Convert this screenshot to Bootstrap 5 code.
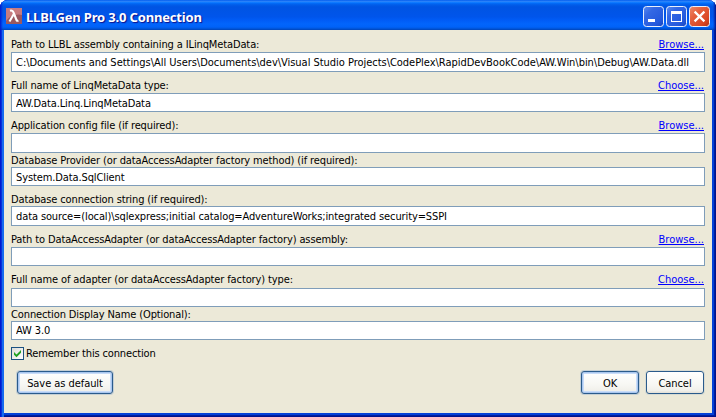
<!DOCTYPE html>
<html lang="en">
<head>
<meta charset="utf-8">
<title>LLBLGen Pro 3.0 Connection</title>
<link href="https://cdn.jsdelivr.net/npm/bootstrap@5.3.0/dist/css/bootstrap.min.css" rel="stylesheet">
<style>
body{background:#fff;font:11px/13px "DejaVu Sans Condensed","DejaVu Sans",sans-serif;color:#000;letter-spacing:-.12px;overflow:hidden}
.xp-window{width:716px;height:417px;padding:0 4px 4px;border-radius:8px 8px 0 0;background:#0831d9;
 box-shadow:inset 1px 0 #0019cf,inset 2px 0 #0831d9,inset 4px 0 #166aee,inset -1px -1px #00138c,inset -2px -2px #001ea0,inset -4px -4px #0441d8}
.xp-title{height:30px;margin:0 -4px;padding:2px 6px 0 6px;border-radius:8px 8px 0 0;
 background:linear-gradient(90deg,#0019cf 0,#0831d900 3px,#0831d900 calc(100% - 3px),#00138c 100%),linear-gradient(#0058ee 0,#2a83f8 4%,#2880fa 6%,#127dff 8%,#036ffc 10%,#0262ee 14%,#0057e5 20%,#0054e3 24%,#0055eb 56%,#005bf5 66%,#0265fc 80%,#0062f8 90%,#0056dc 95%,#0044b8 100%)}
.xp-caption{font:bold 13px/18px "Noto Sans",sans-serif;letter-spacing:-.17px;color:#fff;text-shadow:1px 1px 1px #0f1089;white-space:pre;padding-top:1px}
.client{height:383px;padding:0 7px;background:#ece9d8}
.field-label{height:21px;padding-bottom:1px}
.r22{height:22px}.r20{height:20px}.r14{height:14px;padding-bottom:0}
.field-label.r20{padding-bottom:0}
.field-label.up{padding-bottom:2px}
.field-label a{color:#00f;margin-right:1px;letter-spacing:0;text-decoration:underline;text-underline-offset:1px}
.field-label span{white-space:nowrap}
input.xp-input{height:19px;min-height:0;padding:1px 4px 0;border:1px solid #7f9db9;border-radius:0;background:#fff;color:#000;font:inherit;letter-spacing:-.11px}
input.h20{height:20px;padding:0 4px}
input.path-text{letter-spacing:-.032px}
input.low{padding:0 4px 1px}
.xp-check{width:13px;height:13px;border:1px solid #1c5180;background:linear-gradient(135deg,#dcdcd7,#fff)}
.check-row{height:13px;margin-top:7px;letter-spacing:-.15px}
.button-row{margin-top:11px;padding:0 1px 0 6px}
.xp-btn{height:23px;width:58px;padding:1px 0 0;border:1px solid #2a5b8c;border-radius:3px;background:linear-gradient(#fff,#f7f7f3 60%,#f1f0eb 88%,#e2dfd6);font:inherit;letter-spacing:-.06px;color:#000;box-shadow:0 0 0 1px #d8dbd3}
.xp-focus{box-shadow:0 0 0 1px #c5cfd4,inset 0 0 0 1px #a9c6ee,inset 0 0 0 2px #c8dcf8}
.xp-wide{width:96px}
</style>
<script src="https://cdn.jsdelivr.net/npm/bootstrap@5.3.0/dist/js/bootstrap.bundle.min.js"></script>
</head>
<body>
<div class="xp-window">
 <header class="xp-title d-flex align-items-center">
  <svg width="16" height="16" viewBox="0 0 16 16"><rect width="16" height="16" fill="#9b5960"/><path d="M0 0H16V7Q6 5 0 13Z" fill="#c77c80"/><path d="M4 2.7Q6.7 1.8 7.7 5L10.5 12Q11 13.2 12.4 12.5M7.8 6L3.5 13.5" fill="none" stroke="#fff" stroke-width="2.1"/></svg>
  <span class="xp-caption ms-1 me-auto">LLBLGen Pro 3.0 Connection</span>
  <svg width="67" height="21" viewBox="0 0 67 21">
   <defs>
    <linearGradient id="blue" x1="0" y1="0" x2="1" y2="1"><stop stop-color="#5b8bf0"/><stop offset=".3" stop-color="#3468e4"/><stop offset=".75" stop-color="#2459dd"/><stop offset="1" stop-color="#1744bd"/></linearGradient>
    <linearGradient id="red" x1="0" y1="0" x2="1" y2="1"><stop stop-color="#ee8a6c"/><stop offset=".35" stop-color="#e5603d"/><stop offset=".75" stop-color="#da4623"/><stop offset="1" stop-color="#b43010"/></linearGradient>
   </defs>
   <g stroke="#e8effc"><rect x=".5" y=".5" width="20" height="20" rx="3" fill="url(#blue)"/><rect x="23.5" y=".5" width="20" height="20" rx="3" fill="url(#blue)"/><rect x="46.5" y=".5" width="20" height="20" rx="3" fill="url(#red)"/></g>
   <path d="M5 13H12V16H5Z" fill="#fff"/>
   <path d="M28 5H39V16H28ZM29 8V15H38V8Z" fill="#fff" fill-rule="evenodd"/>
   <path d="M51.6 5.6L61.4 15.4M61.4 5.6L51.6 15.4" stroke="#fff" stroke-width="2.2"/>
  </svg>
 </header>
 <main class="client">
  <div class="field-label r22 d-flex justify-content-between align-items-end"><span>Path to LLBL assembly containing a ILinqMetaData:</span><a href="#">Browse...</a></div>
  <input class="form-control xp-input h20 path-text" value="C:\Documents and Settings\All Users\Documents\dev\Visual Studio Projects\CodePlex\RapidDevBookCode\AW.Win\bin\Debug\AW.Data.dll">
  <div class="field-label d-flex justify-content-between align-items-end"><span>Full name of LinqMetaData type:</span><a href="#">Choose...</a></div>
  <input class="form-control xp-input" value="AW.Data.Linq.LinqMetaData">
  <div class="field-label d-flex justify-content-between align-items-end"><span>Application config file (if required):</span><a href="#">Browse...</a></div>
  <input class="form-control xp-input h20">
  <div class="field-label r14 d-flex align-items-end"><span>Database Provider (or dataAccessAdapter factory method) (if required):</span></div>
  <input class="form-control xp-input" value="System.Data.SqlClient">
  <div class="field-label r20 d-flex align-items-end"><span>Database connection string (if required):</span></div>
  <input class="form-control xp-input h20" value="data source=(local)\sqlexpress;initial catalog=AdventureWorks;integrated security=SSPI">
  <div class="field-label d-flex justify-content-between align-items-end"><span>Path to DataAccessAdapter (or dataAccessAdapter factory) assembly:</span><a href="#">Browse...</a></div>
  <input class="form-control xp-input">
  <div class="field-label r22 up d-flex justify-content-between align-items-end"><span>Full name of adapter (or dataAccessAdapter factory) type:</span><a href="#">Choose...</a></div>
  <input class="form-control xp-input">
  <div class="field-label r14 d-flex align-items-end"><span>Connection Display Name (Optional):</span></div>
  <input class="form-control xp-input low" value="AW 3.0">
  <div class="check-row d-flex align-items-center">
   <span class="xp-check d-flex"><svg width="11" height="11" viewBox="0 0 11 11"><path d="M2 4L4.5 6.5L9 2V4.8L4.5 9.3L2 6.8Z" fill="#21a121"/></svg></span>
   <span style="margin-left:2px">Remember this connection</span>
  </div>
  <div class="button-row d-flex">
   <button class="btn xp-btn xp-focus xp-wide me-auto">Save as default</button>
   <button class="btn xp-btn xp-focus">OK</button>
   <button class="btn xp-btn" style="margin-left:7px">Cancel</button>
  </div>
 </main>
</div>
</body>
</html>
